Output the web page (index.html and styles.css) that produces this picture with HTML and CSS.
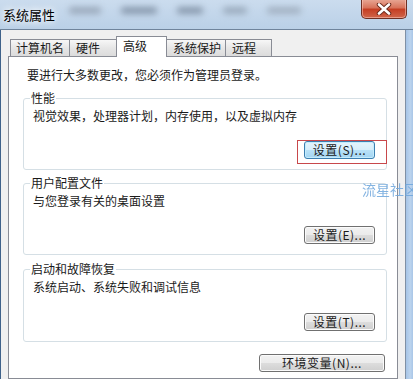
FILE: index.html
```html
<!DOCTYPE html>
<html lang="zh-CN">
<head>
  <meta charset="UTF-8" />
  <title>系统属性</title>
  <link rel="stylesheet" href="styles.css">
</head>
<body>
  <div class="window">
    <div class="titlebar">
      <span class="title">系统属性</span>
      <div class="glass">
        <span class="blob w1"></span>
        <span class="blob w2"></span>
        <span class="blob w3"></span>
        <span class="blob w4"></span>
        <span class="blob w5"></span>
      </div>
      <button class="close" aria-label="关闭">
        <svg width="16" height="12" viewBox="0 0 16 12">
          <path d="M3 1.5 L13 10.5 M13 1.5 L3 10.5" stroke="#6b2a1c" stroke-width="4.5" stroke-linecap="round"/>
          <path d="M3 1.5 L13 10.5 M13 1.5 L3 10.5" stroke="#ffffff" stroke-width="2.6" stroke-linecap="round"/>
        </svg>
      </button>
    </div>

    <div class="frame">
      <div class="client">
        <div class="tabs">
          <div class="tab t1">计算机名</div>
          <div class="tab t2">硬件</div>
          <div class="tab t3 active">高级</div>
          <div class="tab t4">系统保护</div>
          <div class="tab t5">远程</div>
        </div>

        <div class="page">
          <p class="intro">要进行大多数更改，您必须作为管理员登录。</p>

          <fieldset class="group g1">
            <legend>性能</legend>
            <p class="desc">视觉效果，处理器计划，内存使用，以及虚拟内存</p>
            <div class="actions">
              <div class="marked">
                <button class="btn default">设置(S)...</button>
                <span class="redbox"></span>
              </div>
            </div>
          </fieldset>

          <fieldset class="group g2">
            <legend>用户配置文件</legend>
            <p class="desc">与您登录有关的桌面设置</p>
            <div class="actions">
              <button class="btn">设置(E)...</button>
            </div>
          </fieldset>

          <fieldset class="group g3">
            <legend>启动和故障恢复</legend>
            <p class="desc">系统启动、系统失败和调试信息</p>
            <div class="actions">
              <button class="btn">设置(T)...</button>
            </div>
          </fieldset>

          <div class="actions bottom">
            <button class="btn wide">环境变量(N)...</button>
          </div>
        </div>
      </div>
      <div class="edge"></div>
    </div>

    <span class="watermark">流星社区</span>
  </div>
</body>
</html>
```

FILE: styles.css
```css
:root {
  --tab-border: #898c95;
  --group-border: #d5dfe5;
  --client: #f0f0f0;
}

body {
  margin: 0;
  font-family: "Noto Sans CJK SC", "Noto Sans", sans-serif;
  font-size: 12px;
  color: #1a1a1a;
  background: #f0f0f0;
}

.window {
  position: relative;
  width: 413px;
  height: 379px;
  overflow: hidden;
  display: flex;
  flex-direction: column;
}

/* title bar (aero glass) */
.titlebar {
  height: 29px;
  display: flex;
  align-items: flex-start;
  background: linear-gradient(#cbdcee, #bad0e7);
}

.title {
  margin: 5px 0 0 3px;
  font-size: 13px;
  line-height: 20px;
  color: #000;
  text-shadow: 0 0 6px #fff, 0 0 10px #fff;
}

.glass {
  display: flex;
  gap: 20px;
  margin: 7px 0 0 14px;
  filter: blur(3px);
}

.blob {
  height: 7px;
  background: #8899ad;
  border-radius: 3px;
}

.w1 { width: 32px; background: #9aa9bb; }
.w2 { width: 36px; }
.w3 { width: 26px; }
.w4 { width: 24px; background: #9aabbd; }
.w5 { width: 34px; background: #a2b1c2; }

.close {
  margin: -1px 6px 0 auto;
  width: 46px;
  height: 20px;
  padding: 0;
  border: 1px solid #6e3024;
  border-top: 0;
  border-radius: 0 0 5px 5px;
  background: linear-gradient(#e9aa98, #d8745c 45%, #c53f24 55%, #d0664a);
  box-shadow: inset 0 0 0 1px rgba(255, 210, 200, 0.5);
  display: flex;
  align-items: center;
  justify-content: center;
}

/* frame + client */
.frame {
  flex: 1;
  display: flex;
  border-top: 1px solid #6f849c;
}

.client {
  width: 404px;
  background: var(--client);
  border-left: 1px solid #3f628a;
  border-right: 1px solid #7f90a4;
  padding: 6px 7px 0 7px;
  box-sizing: content-box;
  display: flex;
  flex-direction: column;
  width: 390px;
}

.edge {
  flex: 1;
  background: linear-gradient(90deg, #a6c4e6, #bcd4ee 60%, #a9c6e7);
}

/* tabs */
.tabs {
  display: flex;
  align-items: flex-end;
  margin-left: 2px;
  height: 20px;
}

.tab {
  box-sizing: border-box;
  height: 17px;
  line-height: 16px;
  padding-left: 6px;
  margin-right: -1px;
  border: 1px solid var(--tab-border);
  border-bottom: 0;
  background: linear-gradient(#f7f7f7, #e6e6e6 50%, #dcdcdc);
  white-space: nowrap;
}

.t1 { width: 60px; padding-left: 5px; }
.t2 { width: 48px; }
.t3 { width: 51px; }
.t4 { width: 60px; }
.t5 { width: 47px; }

.tab.active {
  position: relative;
  z-index: 1;
  height: 21px;
  padding-top: 1px;
  margin-bottom: -1px;
  background: #fff;
}

/* tab page */
.page {
  flex: 1;
  background: #fff;
  border: 1px solid var(--tab-border);
  padding: 10px 10px 0 14px;
}

.intro {
  margin: 0;
  padding-left: 4px;
  line-height: 16px;
}

.group {
  box-sizing: border-box;
  width: 364px;
  margin: 5px 0 0;
  padding: 2px 11px 10px 9px;
  border: 1px solid var(--group-border);
  border-radius: 3px;
}

.group legend {
  line-height: 16px;
  padding: 0 1px;
  margin-left: -3px;
}

.g1 { margin-top: 7px; }
.g3 { margin-top: 6px; }

.desc {
  margin: 0;
  line-height: 16px;
}

.actions {
  display: flex;
  justify-content: flex-end;
  margin-top: 17px;
}

.g3 .actions { margin-top: 18px; }

.actions.bottom {
  width: 362px;
  margin-top: 12px;
}

.marked {
  position: relative;
  display: flex;
}

.redbox {
  position: absolute;
  left: -7px;
  right: -12px;
  top: -1px;
  bottom: -5px;
  border: 1px solid #c8484b;
}

.btn {
  box-sizing: border-box;
  width: 71px;
  height: 18px;
  padding: 0;
  font-family: inherit;
  font-size: 12px;
  line-height: 16px;
  color: #1a1a1a;
  letter-spacing: 0.5px;
  border: 1px solid #707070;
  border-radius: 3px;
  background: linear-gradient(#f2f2f2, #ebebeb 50%, #dddddd 50%, #cfcfcf);
  box-shadow: inset 0 0 0 1px #fbfbfb;
}

.btn.default {
  border-color: #3c7fb1;
  background: linear-gradient(#e5f4fc, #d6eefb 50%, #b9e2f8 50%, #a3d5f2);
  box-shadow: inset 0 0 0 1px #c5ecfc;
}

.btn.wide {
  width: 126px;
}

.watermark {
  position: absolute;
  left: 362px;
  top: 179px;
  font-size: 14px;
  line-height: 20px;
  color: #6ea6dc;
  opacity: 0.85;
  white-space: nowrap;
}
```
